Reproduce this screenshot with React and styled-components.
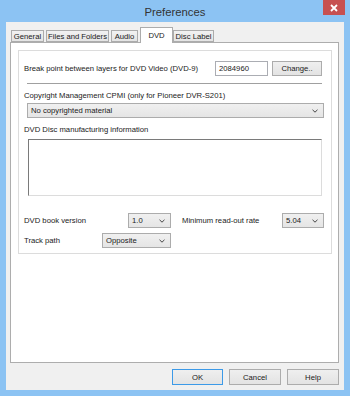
import styled, { createGlobalStyle } from "styled-components"

const Global = createGlobalStyle`
  html, body { margin: 0; padding: 0; }
  body { font-family: "Liberation Sans", Arial, sans-serif; font-size: 7.7px; color: #1a1a1a; }
`

const Window = styled.div`
  width: 350px;
  height: 396px;
  box-sizing: border-box;
  background: #8cc3f3;
  padding: 0 6px 6px 6px;
  display: flex;
  flex-direction: column;
`
const TitleBar = styled.div`
  height: 22px;
  position: relative;
  display: flex;
  align-items: center;
  justify-content: center;
  font-size: 11.3px;
  color: #333;
  padding-top: 1px;
  box-sizing: border-box;
`
/* close box sits over the title bar */
const CloseBox = styled.div`
  position: absolute;
  top: 0;
  right: -1px;
  width: 22px;
  height: 15px;
  background: #c75050;
  display: flex;
  align-items: center;
  justify-content: center;
`
const Body = styled.div`
  flex: 1;
  background: #f0f0f0;
  padding: 5px 5px 5px 4px;
  display: flex;
  flex-direction: column;
`
const TabStrip = styled.div`
  height: 15px;
  display: flex;
  align-items: flex-end;
  padding-left: 1px;
  position: relative;
  z-index: 1;
`
const Tab = styled.div`
  box-sizing: border-box;
  height: ${p => (p.$active ? "16px" : "12px")};
  margin-bottom: ${p => (p.$active ? "-1px" : "0")};
  margin-right: ${p => (p.$active ? "0" : "2px")};
  width: ${p => p.$w}px;
  border: 1px solid #acacac;
  border-bottom: ${p => (p.$active ? "none" : "1px solid #acacac")};
  background: ${p => (p.$active ? "#fff" : "linear-gradient(#f2f2f2, #e4e4e4)")};
  display: flex;
  justify-content: center;
  align-items: ${p => (p.$active ? "flex-start" : "center")};
  padding-top: ${p => (p.$active ? "3px" : "0")};
  line-height: 9px;
  white-space: nowrap;
`
const Panel = styled.div`
  height: 321px;
  box-sizing: border-box;
  border: 1px solid #adadad;
  background: #fff;
  padding: 7px 6px 0 7px;
`
const Group = styled.div`
  box-sizing: border-box;
  width: 314px;
  height: 204px;
  border: 1px solid #dcdcdc;
  padding: 10px 0 0 5px;
  display: flex;
  flex-direction: column;
`
const Row = styled.div`
  display: flex;
  align-items: center;
  height: 15px;
  margin-top: ${p => p.$mt || 0}px;
  margin-bottom: ${p => p.$mb || 0}px;
`
const Label = styled.div`
  width: ${p => (p.$w ? p.$w + "px" : "auto")};
  flex-shrink: 0;
  white-space: nowrap;
  margin-left: ${p => p.$ml || 0}px;
  margin-bottom: ${p => p.$mb || 0}px;
  line-height: 11px;
`
const TextInput = styled.div`
  box-sizing: border-box;
  width: 53px;
  height: 15px;
  border: 1px solid #abadb3;
  padding-left: 3px;
  line-height: 13px;
  background: #fff;
`
const Button = styled.div`
  box-sizing: border-box;
  width: ${p => p.$w}px;
  height: ${p => p.$h || 15}px;
  margin-left: ${p => p.$ml || 0}px;
  border: 1px solid ${p => (p.$default ? "#3c9ae8" : "#acacac")};
  background: linear-gradient(#efefef, #e3e3e3);
  display: flex;
  align-items: center;
  justify-content: center;
`
const Separator = styled.div`
  height: 1px;
  width: 295px;
  margin: 7px 0 6px 3px;
  background: #a0a0a0;
`
const Select = styled.div`
  box-sizing: border-box;
  width: ${p => p.$w}px;
  height: 15px;
  margin-left: ${p => p.$ml || 0}px;
  border: 1px solid #acacac;
  background: linear-gradient(#f0f0f0, #e5e5e5);
  display: flex;
  align-items: center;
  justify-content: space-between;
  padding: 0 5px 0 3px;
  line-height: 13px;
  flex-shrink: 0;
`
const TextArea = styled.div`
  box-sizing: border-box;
  width: 294px;
  height: 57px;
  margin-left: 4px;
  border: 1px solid #dcdcdc;
  border-top-color: #7a7a7a;
  border-left-color: #7a7a7a;
  background: #fff;
`
const Footer = styled.div`
  display: flex;
  justify-content: flex-end;
  margin-top: 6px;
  gap: 6px;
`

const Chevron = () => (
  <svg width="6" height="4" viewBox="0 0 6 4">
    <path d="M0.5 0.8 L3 3.2 L5.5 0.8" fill="none" stroke="#444" strokeWidth="1" />
  </svg>
)

const Dropdown = ({ w, ml, children }) => (
  <Select $w={w} $ml={ml}>
    <span>{children}</span>
    <Chevron />
  </Select>
)

export default function App() {
  return (
    <>
      <Global />
      <Window>
        <TitleBar>
          Preferences
          <CloseBox>
            <svg width="8" height="8" viewBox="0 0 8 8">
              <path d="M1 1 L7 7 M7 1 L1 7" stroke="#fff" strokeWidth="1.8" />
            </svg>
          </CloseBox>
        </TitleBar>
        <Body>
          <TabStrip>
            <Tab $w={33}>General</Tab>
            <Tab $w={63}>Files and Folders</Tab>
            <Tab $w={27}>Audio</Tab>
            <Tab $w={33} $active>DVD</Tab>
            <Tab $w={41}>Disc Label</Tab>
          </TabStrip>
          <Panel>
            <Group>
              <Row>
                <Label $w={191}>Break point between layers for DVD Video (DVD-9)</Label>
                <TextInput>2084960</TextInput>
                <Button $w={50} $ml={4}>Change..</Button>
              </Row>
              <Separator />
              <Label $mb={2}>Copyright Management CPMI (only for Pioneer DVR-S201)</Label>
              <Row $mb={6}>
                <Dropdown w={297} ml={3}>No copyrighted material</Dropdown>
              </Row>
              <Label $mb={4}>DVD Disc manufacturing information</Label>
              <TextArea />
              <Row $mt={17} $mb={5}>
                <Label $w={104}>DVD book version</Label>
                <Dropdown w={43}>1.0</Dropdown>
                <Label $w={100} $ml={11}>Minimum read-out rate</Label>
                <Dropdown w={42}>5.04</Dropdown>
              </Row>
              <Row>
                <Label $w={78}>Track path</Label>
                <Dropdown w={69}>Opposite</Dropdown>
              </Row>
            </Group>
          </Panel>
          <Footer>
            <Button $w={51} $h={16} $default>OK</Button>
            <Button $w={52} $h={16}>Cancel</Button>
            <Button $w={52} $h={16}>Help</Button>
          </Footer>
        </Body>
      </Window>
    </>
  )
}
